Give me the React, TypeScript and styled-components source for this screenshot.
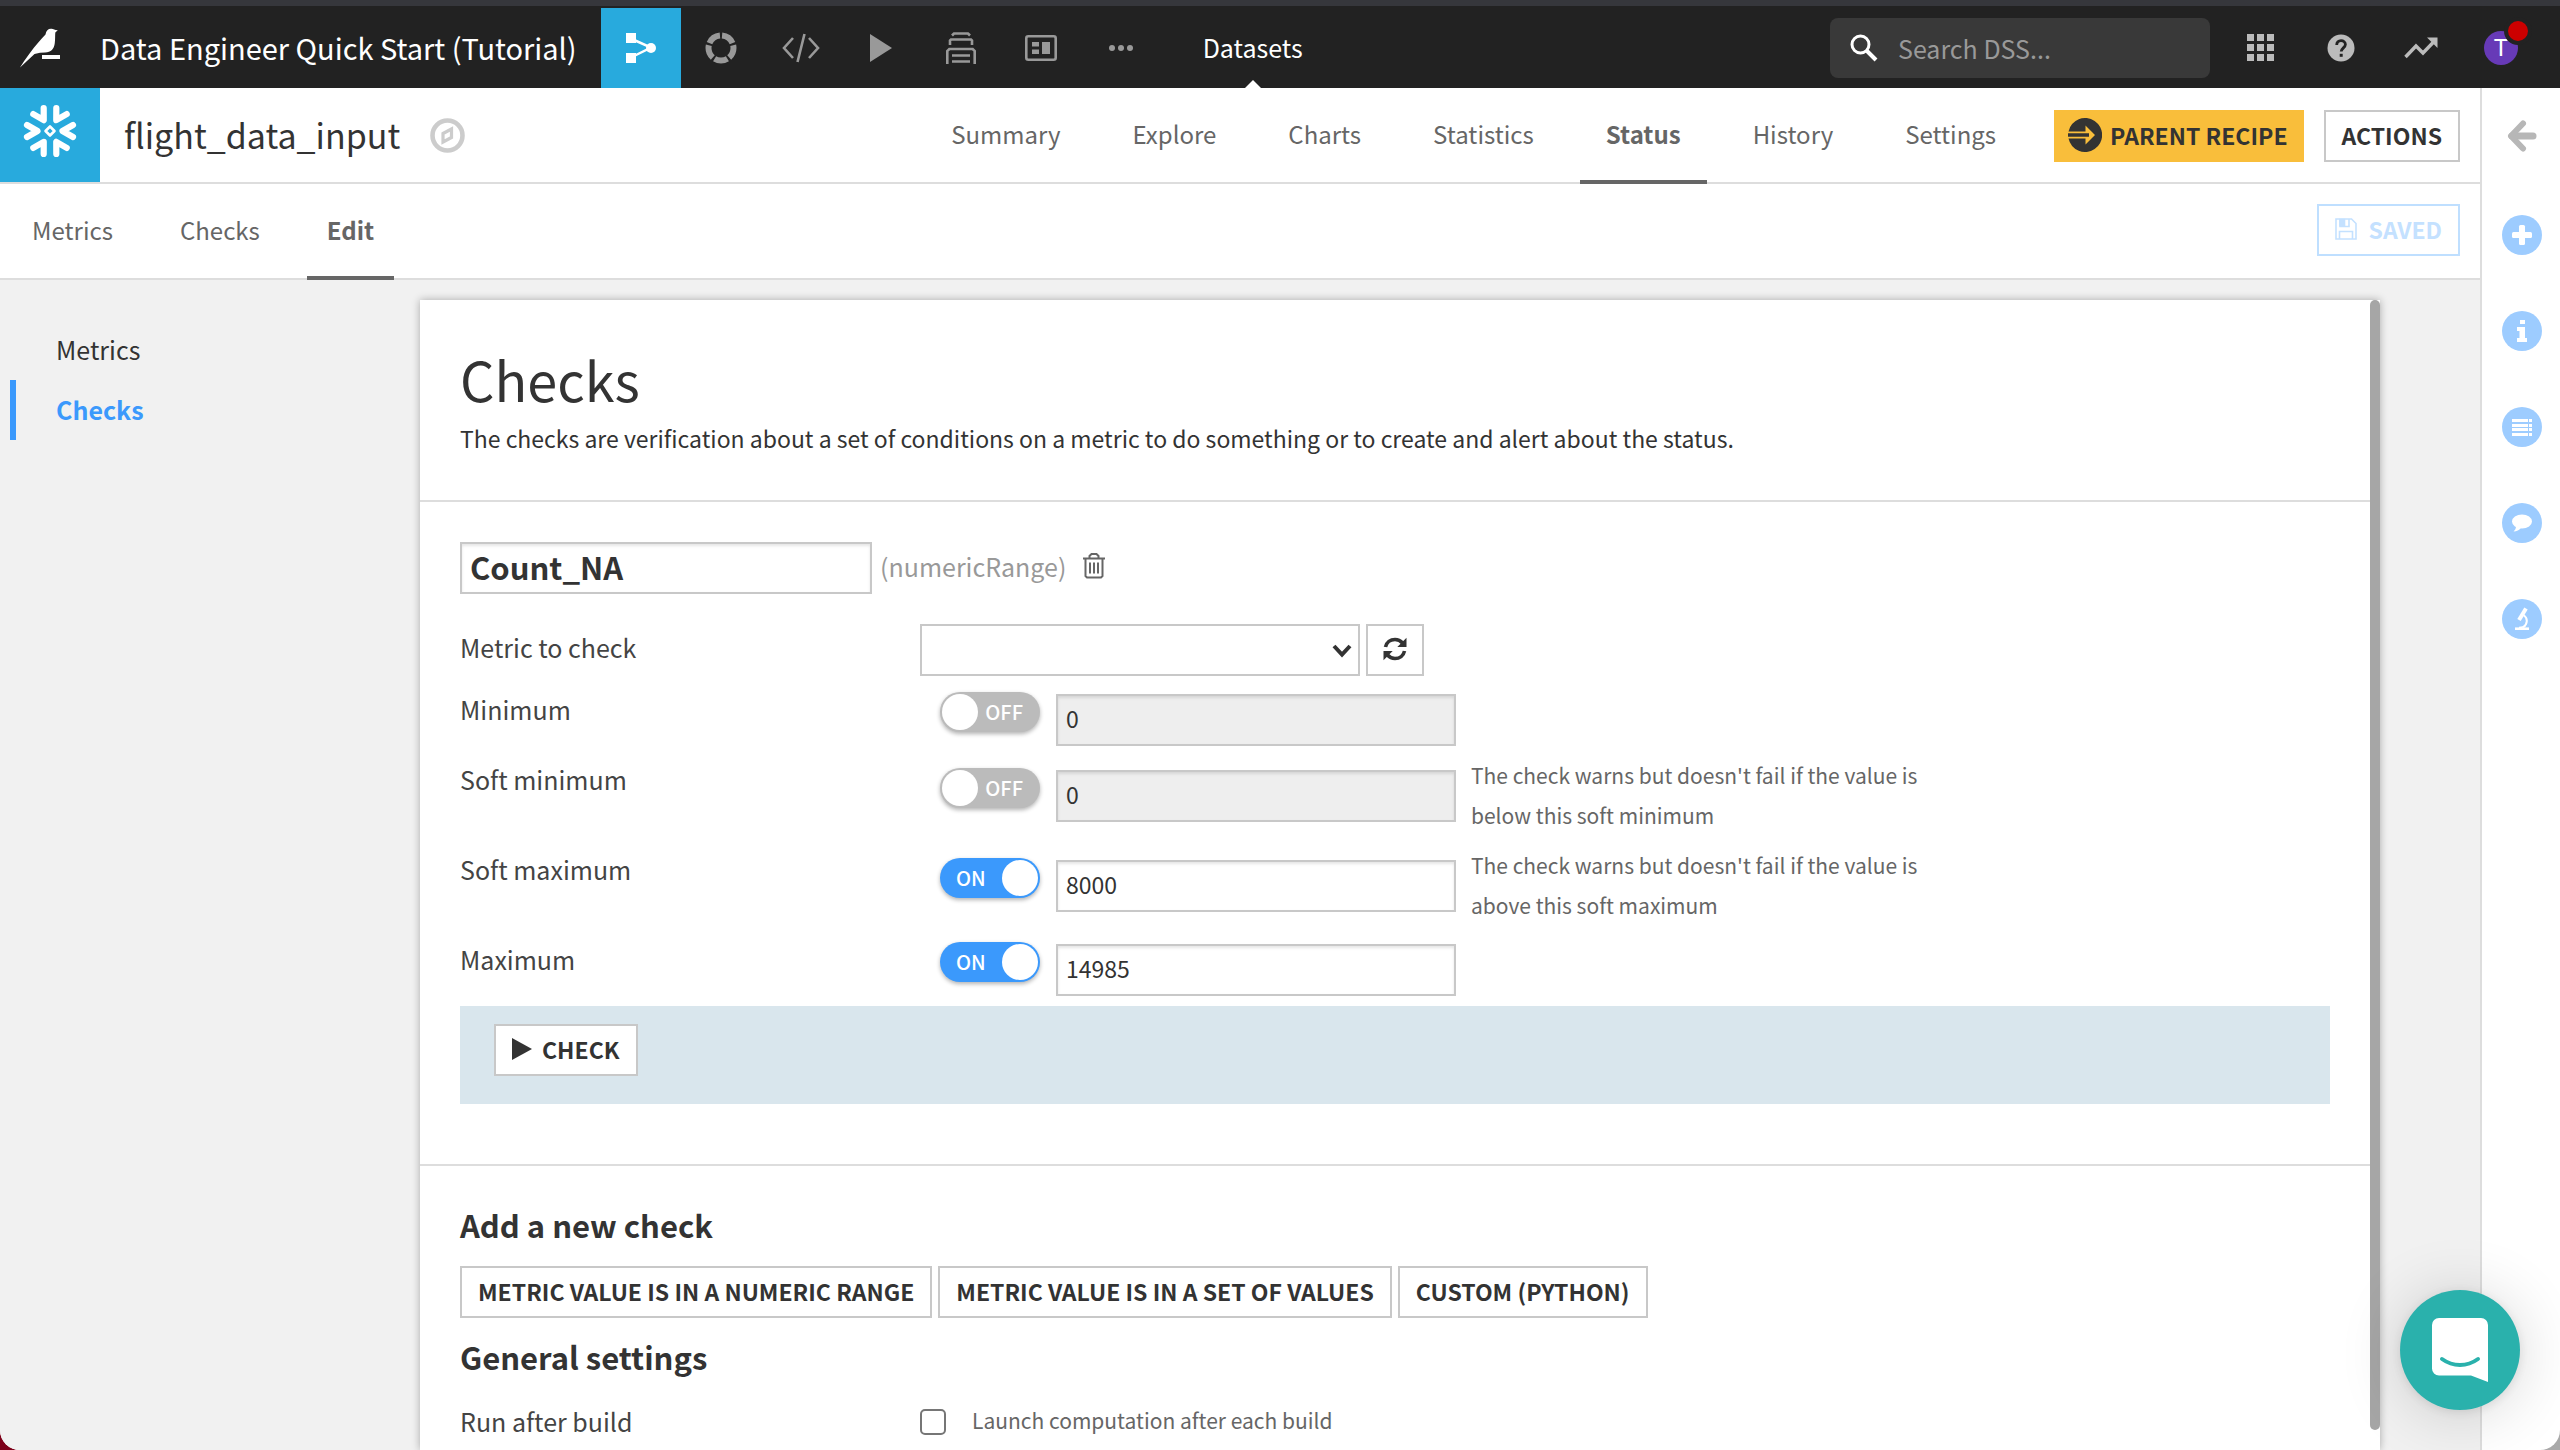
import React from "react";
import styled, { createGlobalStyle, css } from "styled-components";

const ink = "#333333";
const soft = "#666666";
const line = "#dddddd";
const edge = "#c8c8c8";
const blue = "#3b99fc";
const sky = "#28aadd";

const GlobalStyle = createGlobalStyle`
  *, *::before, *::after { box-sizing: border-box; }
  html { background: linear-gradient(90deg, #7d0019 0 50%, #a9a9a9 50% 100%); }
  body {
    margin: 0;
    color: ${ink};
    font-family: "Noto Sans CJK SC", "Noto Sans", sans-serif;
    font-size: 23px;
    line-height: 40px;
  }
  button, input, select { font: inherit; color: inherit; margin: 0; }
  button { cursor: pointer; }
  a { color: inherit; text-decoration: none; }
  svg { display: block; flex: none; }
  h1, h2, p { margin: 0; }
`;

const Page = styled.div`
  display: flex;
  flex-direction: column;
  height: 100vh;
  overflow: hidden;
  background: #ffffff;
  border-top: 6px solid #36373c;
  border-radius: 0 0 20px 20px;
`;

/* ---------- top bar ---------- */

const TopBar = styled.header`
  display: flex;
  align-items: stretch;
  flex: none;
  height: 82px;
  padding-top: 2px;
  background: #222222;
  color: #ffffff;
`;

const Brand = styled.a`
  display: flex;
  align-items: center;
  width: 100px;
  padding-left: 20px;
`;

const Project = styled.a`
  display: flex;
  align-items: center;
  padding: 0 24px 2px 0;
  font-size: 29px;
  white-space: nowrap;
`;

const NavItem = styled.a<{ $active?: boolean }>`
  display: flex;
  align-items: center;
  justify-content: center;
  width: 80px;
  color: ${(p) => (p.$active ? "#ffffff" : "#999999")};
  background: ${(p) => (p.$active ? sky : "transparent")};
`;

const Section = styled.a`
  position: relative;
  display: flex;
  align-items: center;
  margin-left: 42px;
  padding-bottom: 2px;
  font-size: 25px;

  &::after {
    content: "";
    position: absolute;
    bottom: 0;
    left: 50%;
    margin-left: -8px;
    border: 8px solid transparent;
    border-top-width: 0;
    border-bottom-color: #ffffff;
  }
`;

const Search = styled.label`
  display: flex;
  align-items: center;
  align-self: center;
  gap: 20px;
  width: 380px;
  height: 60px;
  margin-left: auto;
  padding-left: 20px;
  border-radius: 8px;
  background: #393939;

  input {
    flex: 1;
    min-width: 0;
    padding: 0;
    border: 0;
    outline: 0;
    background: none;
    font-size: 25px;
  }
  input::placeholder { color: #999999; opacity: 1; }
`;

const Tools = styled.nav`
  display: flex;
  padding: 0 19px 0 11px;
`;

const Tool = styled(NavItem)`
  color: #bbbbbb;
`;

const Avatar = styled.span`
  position: relative;
  width: 34px;
  height: 34px;
  border-radius: 50%;
  background: #673ab7;
  color: #ffffff;
  font-family: Roboto, sans-serif;
  font-size: 24px;
  line-height: 34px;
  text-align: center;

  &::after {
    content: "";
    position: absolute;
    top: -14px;
    right: -14px;
    width: 28px;
    height: 28px;
    border: 4px solid #222222;
    border-radius: 50%;
    background: #cc0000;
  }
`;

/* ---------- frame ---------- */

const Frame = styled.div`
  display: flex;
  flex: 1;
  min-height: 0;
`;

const Main = styled.main`
  display: flex;
  flex: 1;
  flex-direction: column;
  min-width: 0;
`;

const Rail = styled.aside`
  display: flex;
  flex: none;
  flex-direction: column;
  align-items: center;
  gap: 56px;
  width: 80px;
  padding: 25px 0 0 2px;
  border-left: 2px solid ${line};
`;

const RailButton = styled.button<{ $plain?: boolean }>`
  display: flex;
  align-items: center;
  justify-content: center;
  width: 40px;
  height: ${(p) => (p.$plain ? 46 : 40)}px;
  padding: 0;
  border: 0;
  border-radius: 50%;
  background: ${(p) => (p.$plain ? "none" : "#9dccff")};
  color: ${(p) => (p.$plain ? "#b7b7b7" : "#ffffff")};
`;

/* ---------- dataset header ---------- */

const Header = styled.div`
  display: flex;
  align-items: stretch;
  flex: none;
  height: 96px;
  padding-right: 20px;
  border-bottom: 2px solid ${line};
`;

const SourceTile = styled.div`
  display: flex;
  align-items: center;
  justify-content: center;
  flex: none;
  width: 100px;
  padding-bottom: 8px;
  background: ${sky};
  color: #ffffff;
`;

const DatasetName = styled.h1`
  display: flex;
  align-items: center;
  gap: 30px;
  margin: 0 auto 0 24px;
  font-size: 34px;
  font-weight: 400;
`;

const Tabs = styled.nav<{ $gap: number }>`
  display: flex;
  gap: ${(p) => p.$gap}px;
  margin-bottom: -2px;
`;

const Tab = styled.a<{ $active?: boolean; $pad: number }>`
  display: flex;
  align-items: center;
  padding: 0 ${(p) => p.$pad}px;
  border-bottom: 4px solid transparent;
  color: ${soft};
  font-size: 24px;
  ${(p) =>
    p.$active &&
    css`
      border-bottom-color: ${soft};
      font-weight: 700;
    `}
`;

const Button = styled.button<{ $tone?: "accent" | "faded" }>`
  display: inline-flex;
  align-items: center;
  gap: 10px;
  height: 52px;
  padding: 0 16px 2px;
  border: 2px solid ${edge};
  background: #ffffff;
  font-weight: 700;
  white-space: nowrap;
  ${(p) =>
    p.$tone === "accent" &&
    css`
      gap: 8px;
      padding: 0 14px 2px 12px;
      border-color: #f9be3b;
      background: #f9be3b;
    `}
  ${(p) =>
    p.$tone === "faded" &&
    css`
      gap: 12px;
      border-color: #bfdfff;
      color: #c4e1ff;
    `}
`;

const HeaderActions = styled.div`
  display: flex;
  align-items: center;
  gap: 20px;
  margin-left: 32px;
  padding-top: 2px;
`;

const SubHeader = styled(Header)`
  justify-content: space-between;
  padding-left: 12px;
`;

const SaveSlot = styled.div`
  display: flex;
  align-items: center;
  padding-bottom: 2px;
`;

/* ---------- body ---------- */

const Body = styled.div`
  display: flex;
  flex: 1;
  min-height: 0;
  padding: 20px 100px 0 0;
  background: #f1f1f1;
`;

const SideNav = styled.nav`
  flex: none;
  width: 420px;
  padding: 20px 0 0 10px;
`;

const SideLink = styled.a<{ $active?: boolean }>`
  display: flex;
  align-items: center;
  height: 60px;
  padding: 0 0 2px 40px;
  border-left: 6px solid transparent;
  font-size: 25px;
  ${(p) =>
    p.$active &&
    css`
      border-left-color: ${blue};
      color: ${blue};
      font-weight: 700;
    `}
`;

const Card = styled.section`
  display: flex;
  flex: 1;
  min-width: 0;
  background: #ffffff;
  box-shadow: 0 0 8px rgba(0, 0, 0, 0.3);
`;

const CardContent = styled.div`
  flex: 1;
  min-width: 0;
  overflow: hidden;
`;

const ScrollThumb = styled.div`
  flex: none;
  width: 10px;
  margin-bottom: 20px;
  border-radius: 5px;
  background: #a6a6a6;
`;

const Block = styled.div`
  padding: 40px;

  & + & { border-top: 2px solid ${line}; }
`;

const Intro = styled(Block)`
  padding: 44px 40px 42px;
`;

const Title = styled.h2`
  margin-bottom: 4px;
  font-size: 54px;
  font-weight: 400;
  line-height: 70px;
`;

const Subtitle = styled.h2`
  font-size: 31px;
  line-height: 38px;
`;

const field = css`
  height: 52px;
  padding: 0 8px 4px;
  border: 2px solid ${edge};
  border-radius: 0;
  outline: 0;
  background: #ffffff;
`;

const CheckHead = styled.div`
  display: flex;
  align-items: center;
  gap: 8px;
  margin-bottom: 30px;
`;

const NameInput = styled.input`
  ${field}
  width: 412px;
  font-size: 31px;
  font-weight: 700;
  box-shadow: inset 0 2px 3px rgba(0, 0, 0, 0.1);
`;

const Kind = styled.span`
  padding-bottom: 4px;
  color: #999999;
  font-size: 25px;
`;

const IconButton = styled.button`
  padding: 0 9px 4px;
  border: 0;
  background: none;
  color: ${soft};
`;

const MetricRow = styled.div`
  display: grid;
  grid-template-columns: 460px 440px auto;
  align-items: center;
  justify-content: start;
  margin-bottom: 8px;
`;

const Name = styled.label`
  padding-bottom: 6px;
  color: #444444;
  font-size: 25px;
`;

const SelectBox = styled.span`
  position: relative;
  display: block;

  svg {
    position: absolute;
    top: 20px;
    right: 8px;
    pointer-events: none;
  }
`;

const Select = styled.select`
  ${field}
  display: block;
  width: 100%;
  appearance: none;
`;

const RefreshButton = styled(Button)`
  margin-left: 6px;
  padding: 0 15px 2px;
`;

const LimitRow = styled.div<{ $help?: boolean }>`
  display: grid;
  grid-template-columns: 480px 116px 400px minmax(0, 480px);
  align-items: start;
  min-height: ${(p) => (p.$help ? 90 : 70)}px;
  padding-top: ${(p) => (p.$help ? 0 : 2)}px;

  & > ${Name} { padding-top: ${(p) => (p.$help ? 5 : 3)}px; }
`;

const Limit = styled.input`
  ${field}
  box-shadow: inset 0 2px 3px rgba(0, 0, 0, 0.1);

  &:disabled { background: #eeeeee; color: ${ink}; opacity: 1; }
`;

const LimitCell = styled.div<{ $help?: boolean }>`
  display: grid;
  padding-top: ${(p) => (p.$help ? 16 : 8)}px;
`;

const SwitchCell = styled.div<{ $help?: boolean }>`
  padding-top: ${(p) => (p.$help ? 14 : 6)}px;
`;

const Switch = styled.label<{ $on: boolean }>`
  display: flex;
  flex-direction: ${(p) => (p.$on ? "row" : "row-reverse")};
  align-items: center;
  justify-content: space-between;
  width: 100px;
  height: 40px;
  padding: 2px;
  border-radius: 20px;
  background: ${(p) => (p.$on ? blue : "#bbbbbb")};
  box-shadow: 0 2px 4px rgba(0, 0, 0, 0.3);
  color: #ffffff;
  font-size: 20px;
  font-weight: 500;
  cursor: pointer;

  input {
    flex: none;
    appearance: none;
    width: 36px;
    height: 36px;
    border-radius: 50%;
    background: #ffffff;
  }
  span { padding: ${(p) => (p.$on ? "0 0 0 14px" : "0 15px 0 0")}; }
`;

const Help = styled.p`
  padding: 1px 0 0 15px;
  color: ${soft};
  font-size: 21px;
  line-height: 40px;
`;

const RunBand = styled.div`
  margin: 2px 0 20px;
  padding: 18px 34px 28px;
  background: #d9e6ed;
`;

const ButtonRow = styled.div`
  display: flex;
  gap: 6px;
  margin: 22px 0 20px;
`;

const BuildRow = styled.div`
  display: grid;
  grid-template-columns: 460px auto;
  align-items: center;
  justify-content: start;
  margin-top: 24px;
`;

const BuildOption = styled.label`
  display: flex;
  align-items: center;
  gap: 26px;
  padding-bottom: 8px;
  color: ${soft};
  font-size: 21px;

  input {
    appearance: none;
    width: 26px;
    height: 26px;
    margin-top: 4px;
    border: 2px solid #767676;
    border-radius: 5px;
    background: #ffffff;
  }
`;

const Chat = styled.button`
  position: fixed;
  right: 40px;
  bottom: 40px;
  display: flex;
  align-items: center;
  justify-content: center;
  width: 120px;
  height: 120px;
  padding: 0;
  border: 0;
  border-radius: 50%;
  background: #2ab1ac;
  box-shadow: 0 2px 12px rgba(0, 0, 0, 0.1), 0 4px 64px rgba(0, 0, 0, 0.16);
`;

/* ---------- drawings ---------- */

const BirdLogo = () => (
  <svg width="40" height="40" viewBox="0 0 40 40" fill="#fff">
    <path d="M0 39.5C4 33 15 17 25.5 6.5C26 2.5 28.5.5 31.5.8C33.5 1 34.5 2 37.8 2.2L35.3 4.5C35 8 35.3 11 34.8 15C34.2 21 31 24.3 25 24.5L20 24.8L14.5 26Z" />
    <rect x="22" y="27" width="18" height="4" />
  </svg>
);

const FlowIcon = () => (
  <svg width="32" height="32" viewBox="0 0 32 32" fill="currentColor">
    <path d="M1 1h10v10H1zM1 21h10v10H1z" />
    <circle cx="26" cy="16" r="5" />
    <path d="M8 7.5l18 8-18 9" fill="none" stroke="currentColor" strokeWidth="2.5" />
  </svg>
);

const RingIcon = () => (
  <svg width="32" height="32" viewBox="0 0 32 32">
    <circle cx="16" cy="16" r="12.5" fill="none" stroke="currentColor" strokeWidth="6" pathLength="50" strokeDasharray="8.6 1.4" strokeDashoffset="-8.2" />
  </svg>
);

const CodeIcon = () => (
  <svg width="38" height="30" viewBox="0 0 38 30" fill="none" stroke="currentColor" strokeWidth="2.6">
    <path d="M11 5L2 15l9 10M27 5l9 10-9 10M22.5 1l-7 28" />
  </svg>
);

const PlayIcon = ({ w, h }: { w: number; h: number }) => (
  <svg width={w} height={h} viewBox="0 0 22 28" preserveAspectRatio="none" fill="currentColor">
    <path d="M0 0l22 14L0 28z" />
  </svg>
);

const StackIcon = () => (
  <svg width="30" height="32" viewBox="0 0 30 32" fill="none" stroke="currentColor" strokeWidth="2.6">
    <path d="M6 3.5L8 1.5h14l2 2M4 13V8.5l1-1h20l1 1V13M1.3 32V19l2-2h23.4l2 2v13M6 23.5h18M6 29.5h18" />
  </svg>
);

const DashboardIcon = () => (
  <svg width="32" height="26" viewBox="0 0 32 26" fill="currentColor">
    <rect x="1.3" y="1.3" width="29.4" height="23.4" rx="2" fill="none" stroke="currentColor" strokeWidth="2.6" />
    <path d="M7 7h7v4.5H7zM7 14.5h7V19H7zM17 7h8v12h-8z" />
  </svg>
);

const DotsIcon = () => (
  <svg width="26" height="8" viewBox="0 0 26 8" fill="currentColor">
    <circle cx="4" cy="4" r="3" />
    <circle cx="13" cy="4" r="3" />
    <circle cx="22" cy="4" r="3" />
  </svg>
);

const SearchIcon = () => (
  <svg width="28" height="28" viewBox="0 0 28 28" fill="none" stroke="#fff" strokeWidth="3">
    <circle cx="10.5" cy="10.5" r="8.5" />
    <path d="M16.5 16.5L26 26" strokeWidth="4" />
  </svg>
);

const GridIcon = () => (
  <svg width="28" height="28" viewBox="0 0 28 28" fill="currentColor">
    {[0, 10, 20].map((y) => [0, 10, 20].map((x) => <rect key={`${x}-${y}`} x={x} y={y} width="7" height="7" />))}
  </svg>
);

const HelpIcon = () => (
  <svg width="28" height="28" viewBox="0 0 28 28">
    <circle cx="14" cy="14" r="13.5" fill="currentColor" />
    <path d="M9.7 11c0-2.6 1.8-4.4 4.3-4.4s4.4 1.6 4.4 4c0 3-4.2 3.6-4.2 7" fill="none" stroke="#222" strokeWidth="2.8" />
    <rect x="12.7" y="19.8" width="3" height="3" fill="#222" />
  </svg>
);

const TrendIcon = () => (
  <svg width="34" height="22" viewBox="0 0 34 22" fill="none" stroke="currentColor" strokeWidth="3.4">
    <path d="M1.5 20L12 9l7 7L31 3.5" />
    <path d="M23 .5h10.5V11z" fill="currentColor" stroke="none" />
  </svg>
);

const SnowflakeLogo = () => (
  <svg width="54" height="54" viewBox="-27 -27 54 54" fill="none" stroke="currentColor" strokeWidth="6.2" strokeLinecap="round" strokeLinejoin="round">
    {[0, 60, 120, 180, 240, 300].map((a) => (
      <path key={a} transform={`rotate(${a})`} d="M23 -6L12.5 0L23 6" />
    ))}
    <path d="M0 -4.5L4.5 0L0 4.5L-4.5 0z" strokeWidth="2.6" />
  </svg>
);

const CompassIcon = () => (
  <svg width="35" height="35" viewBox="0 0 35 35" fill="none" stroke="#cccccc">
    <circle cx="17.5" cy="17.5" r="15" strokeWidth="4.6" />
    <path d="M13 15.5l8.5-4.5v8.5L13 24z" strokeWidth="3.2" />
  </svg>
);

const RecipeIcon = () => (
  <svg width="34" height="34" viewBox="0 0 34 34">
    <path d="M.5 13.5A17 17 0 1 1 .5 20.5H17.5V26.5L27 17L17.5 7.5V13.5z" fill="#333" />
    <path d="M0 15.3h21v3.4H0z" fill="#333" />
  </svg>
);

const SaveIcon = () => (
  <svg width="22" height="22" viewBox="0 0 22 22" fill="none" stroke="currentColor" strokeWidth="1.6">
    <path d="M1 1h15.5L21 5.5V21H1z" />
    <path d="M4.5 21v-7.5h13V21M5 1v7.5h9V1" />
    <path d="M5 1.5h4.5v6H5z" fill="currentColor" />
  </svg>
);

const TrashIcon = () => (
  <svg width="22" height="26" viewBox="0 0 22 26" fill="none" stroke="currentColor" strokeWidth="2">
    <path d="M0 5.5h22M6.5 5V3l2-2h5l2 2v2M2.5 5.5V23l1.5 1.5h14l1.5-1.5V5.5M7 9.5v11M11 9.5v11M15 9.5v11" />
  </svg>
);

const ChevronIcon = () => (
  <svg width="20" height="14" viewBox="0 0 20 14" fill="none" stroke={ink} strokeWidth="4">
    <path d="M2 2l8 8.5L18 2" />
  </svg>
);

const RefreshIcon = () => (
  <svg width="24" height="24" viewBox="0 0 24 24" fill="none" stroke="currentColor" strokeWidth="3.6">
    <path d="M2.5 10C3.5 5 7.5 2.5 12 2.5c3 0 5.5 1.2 7.5 3.5M21.5 14c-1 5-5 7.5-9.5 7.5-3 0-5.5-1.2-7.5-3.5" />
    <path d="M23.5.8V10h-9.2zM.5 23.2V14h9.2z" fill="currentColor" stroke="none" />
  </svg>
);

const BackIcon = () => (
  <svg width="32" height="32" viewBox="0 0 32 32" fill="none" stroke="currentColor" strokeLinecap="round" strokeLinejoin="round">
    <path d="M6 16h21" strokeWidth="7" />
    <path d="M17 3.5L5 16L17 28.5" strokeWidth="6" />
  </svg>
);

const PlusIcon = () => (
  <svg width="20" height="20" viewBox="0 0 20 20" fill="currentColor">
    <rect x="7" width="6" height="20" rx="1.5" />
    <rect y="7" width="20" height="6" rx="1.5" />
  </svg>
);

const InfoIcon = () => (
  <svg width="10" height="22" viewBox="0 0 10 22" fill="currentColor">
    <path d="M3 0h5v4H3zM0 7h8v11h2v4H0v-4h2.5v-7H0z" />
  </svg>
);

const ListIcon = () => (
  <svg width="20" height="17" viewBox="0 0 20 17" fill="currentColor">
    {[0, 5, 9, 14].map((y) => (
      <path key={y} d={`M0 ${y}h16v3H0zM17 ${y}h3v3h-3z`} />
    ))}
  </svg>
);

const CommentIcon = () => (
  <svg width="20" height="18" viewBox="0 0 20 18" fill="currentColor">
    <ellipse cx="10" cy="7.5" rx="10" ry="7" />
    <path d="M4 12c0 2.5-.8 4-2.5 5.5C5 17.5 7 16 9 14z" />
  </svg>
);

const LabIcon = () => (
  <svg width="16" height="24" viewBox="0 0 16 24" fill="none" stroke="currentColor">
    <path d="M12 1.5L5 13" strokeWidth="4" />
    <path d="M9.5 8c4.5 3 4.5 9-.5 12.5" strokeWidth="2" />
    <path d="M1 21.7h14" strokeWidth="2.6" />
    <path d="M5 20.5c3 0 5-.5 6.5-2" strokeWidth="1.6" />
  </svg>
);

const ChatIcon = () => (
  <svg width="56" height="64" viewBox="0 0 56 64">
    <path d="M7 0h42a7 7 0 0 1 7 7v57l-17-6.5H7a7 7 0 0 1-7-7V7a7 7 0 0 1 7-7z" fill="#fff" />
    <path d="M10 41c11 8 25 8 36 0" fill="none" stroke="#2ab1ac" strokeWidth="4" strokeLinecap="round" />
  </svg>
);

/* ---------- content ---------- */

const navIcons = [
  { name: "Flow", icon: <FlowIcon />, active: true },
  { name: "Lab", icon: <RingIcon /> },
  { name: "Code", icon: <CodeIcon /> },
  { name: "Jobs", icon: <PlayIcon w={22} h={28} /> },
  { name: "Automation", icon: <StackIcon /> },
  { name: "Dashboards", icon: <DashboardIcon /> },
  { name: "More", icon: <DotsIcon /> },
];

const tabs = ["Summary", "Explore", "Charts", "Statistics", "Status", "History", "Settings"];

const limits = [
  { id: "min", name: "Minimum", on: false, value: "0" },
  {
    id: "soft-min",
    name: "Soft minimum",
    on: false,
    value: "0",
    help: "The check warns but doesn't fail if the value is below this soft minimum",
  },
  {
    id: "soft-max",
    name: "Soft maximum",
    on: true,
    value: "8000",
    help: "The check warns but doesn't fail if the value is above this soft maximum",
  },
  { id: "max", name: "Maximum", on: true, value: "14985" },
];

const newChecks = ["METRIC VALUE IS IN A NUMERIC RANGE", "METRIC VALUE IS IN A SET OF VALUES", "CUSTOM (PYTHON)"];

const railItems = [
  { name: "Add", icon: <PlusIcon /> },
  { name: "Details", icon: <InfoIcon /> },
  { name: "Schema", icon: <ListIcon /> },
  { name: "Discussions", icon: <CommentIcon /> },
  { name: "Lab", icon: <LabIcon /> },
];

type LimitProps = { id: string; name: string; on: boolean; value: string; help?: string };

function LimitField({ id, name, on: initial, value, help }: LimitProps) {
  const [on, setOn] = React.useState(initial);
  return (
    <LimitRow $help={!!help}>
      <Name htmlFor={id}>{name}</Name>
      <SwitchCell $help={!!help}>
        <Switch $on={on}>
          <span>{on ? "ON" : "OFF"}</span>
          <input type="checkbox" aria-label={`Use ${name}`} checked={on} onChange={() => setOn(!on)} />
        </Switch>
      </SwitchCell>
      <LimitCell $help={!!help}>
        <Limit id={id} defaultValue={value} disabled={!on} />
      </LimitCell>
      {help && <Help>{help}</Help>}
    </LimitRow>
  );
}

export default function App() {
  return (
    <>
      <GlobalStyle />
      <Page>
        <TopBar>
          <Brand href="#" aria-label="Home">
            <BirdLogo />
          </Brand>
          <Project href="#">Data Engineer Quick Start (Tutorial)</Project>
          {navIcons.map((n) => (
            <NavItem key={n.name} href="#" aria-label={n.name} $active={n.active}>
              {n.icon}
            </NavItem>
          ))}
          <Section href="#">Datasets</Section>
          <Search>
            <SearchIcon />
            <input type="search" placeholder="Search DSS..." aria-label="Search DSS" />
          </Search>
          <Tools>
            <Tool href="#" aria-label="Applications">
              <GridIcon />
            </Tool>
            <Tool href="#" aria-label="Help">
              <HelpIcon />
            </Tool>
            <Tool href="#" aria-label="Activity">
              <TrendIcon />
            </Tool>
            <Tool href="#" aria-label="Profile">
              <Avatar>T</Avatar>
            </Tool>
          </Tools>
        </TopBar>

        <Frame>
          <Main>
            <Header>
              <SourceTile>
                <SnowflakeLogo />
              </SourceTile>
              <DatasetName>
                flight_data_input
                <CompassIcon />
              </DatasetName>
              <Tabs $gap={20}>
                {tabs.map((t) => (
                  <Tab key={t} href="#" $pad={26} $active={t === "Status"}>
                    {t}
                  </Tab>
                ))}
              </Tabs>
              <HeaderActions>
                <Button $tone="accent">
                  <RecipeIcon />
                  PARENT RECIPE
                </Button>
                <Button>ACTIONS</Button>
              </HeaderActions>
            </Header>

            <SubHeader>
              <Tabs $gap={27}>
                {["Metrics", "Checks", "Edit"].map((t) => (
                  <Tab key={t} href="#" $pad={20} $active={t === "Edit"}>
                    {t}
                  </Tab>
                ))}
              </Tabs>
              <SaveSlot>
                <Button $tone="faded">
                  <SaveIcon />
                  SAVED
                </Button>
              </SaveSlot>
            </SubHeader>

            <Body>
              <SideNav>
                <SideLink href="#">Metrics</SideLink>
                <SideLink href="#" $active>
                  Checks
                </SideLink>
              </SideNav>

              <Card>
                <CardContent>
                  <Intro>
                    <Title>Checks</Title>
                    <p>
                      The checks are verification about a set of conditions on a metric to do something or to create and
                      alert about the status.
                    </p>
                  </Intro>

                  <Block>
                    <CheckHead>
                      <NameInput defaultValue="Count_NA" aria-label="Check name" />
                      <Kind>(numericRange)</Kind>
                      <IconButton aria-label="Delete check">
                        <TrashIcon />
                      </IconButton>
                    </CheckHead>
                    <MetricRow>
                      <Name htmlFor="metric">Metric to check</Name>
                      <SelectBox>
                        <Select id="metric" defaultValue="">
                          <option value=""></option>
                        </Select>
                        <ChevronIcon />
                      </SelectBox>
                      <RefreshButton aria-label="Refresh metrics">
                        <RefreshIcon />
                      </RefreshButton>
                    </MetricRow>
                    {limits.map((l) => (
                      <LimitField key={l.id} {...l} />
                    ))}
                    <RunBand>
                      <Button>
                        <PlayIcon w={20} h={22} />
                        CHECK
                      </Button>
                    </RunBand>
                  </Block>

                  <Block>
                    <Subtitle>Add a new check</Subtitle>
                    <ButtonRow>
                      {newChecks.map((c) => (
                        <Button key={c}>{c}</Button>
                      ))}
                    </ButtonRow>
                    <Subtitle>General settings</Subtitle>
                    <BuildRow>
                      <Name htmlFor="after-build">Run after build</Name>
                      <BuildOption>
                        <input id="after-build" type="checkbox" />
                        Launch computation after each build
                      </BuildOption>
                    </BuildRow>
                  </Block>
                </CardContent>
                <ScrollThumb />
              </Card>
            </Body>
          </Main>

          <Rail>
            <RailButton $plain aria-label="Collapse panel">
              <BackIcon />
            </RailButton>
            {railItems.map((r) => (
              <RailButton key={r.name} aria-label={r.name}>
                {r.icon}
              </RailButton>
            ))}
          </Rail>
        </Frame>
      </Page>
      <Chat aria-label="Open chat">
        <ChatIcon />
      </Chat>
    </>
  );
}
